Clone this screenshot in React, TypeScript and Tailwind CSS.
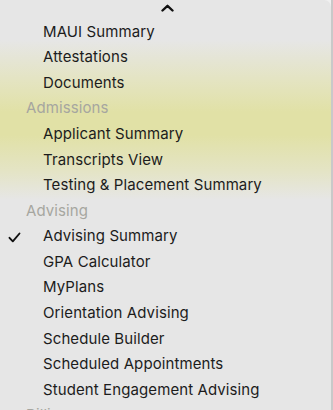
import React from "react";

type Row = { label: string; header?: boolean; checked?: boolean };

const rows: Row[] = [
  { label: "MAUI Summary" },
  { label: "Attestations" },
  { label: "Documents" },
  { label: "Admissions", header: true },
  { label: "Applicant Summary" },
  { label: "Transcripts View" },
  { label: "Testing & Placement Summary" },
  { label: "Advising", header: true },
  { label: "Advising Summary", checked: true },
  { label: "GPA Calculator" },
  { label: "MyPlans" },
  { label: "Orientation Advising" },
  { label: "Schedule Builder" },
  { label: "Scheduled Appointments" },
  { label: "Student Engagement Advising" },
  { label: "Billing", header: true },
];

export default function App() {
  return (
    <div className="w-[333px] h-[410px] overflow-hidden bg-[#f0f0f0] flex">
      <div
        className="w-[331px] h-full rounded-tr-[7px] overflow-hidden flex flex-col bg-[linear-gradient(to_bottom,#e6e6e6_0px,#e6e6e6_40px,#e4e4c2_80px,#e1e1a6_112px,#e1e1a6_135px,#e4e4c4_170px,#e6e6e6_200px,#e6e6e6_100%)]"
        style={{ fontFamily: "Inter, 'Noto Sans', sans-serif" }}
      >
        <div className="h-[19px] shrink-0 flex justify-center items-start pt-[4px] pl-[4px]">
          <svg width="13" height="8" viewBox="0 0 13 8">
            <path d="M1.5 6.5 L6.5 1.8 L11.5 6.5" fill="none" stroke="#111" strokeWidth="2.4" strokeLinecap="round" strokeLinejoin="round" />
          </svg>
        </div>
        {rows.map((r) => (
          <div key={r.label} className="h-[25.6px] shrink-0 flex items-center relative">
            {r.checked && (
              <svg className="absolute left-[8px] top-[8px]" width="13" height="11" viewBox="0 0 13 11">
                <path d="M1.5 5.8 L4.8 9.3 L11.5 1.5" fill="none" stroke="#111" strokeWidth="1.9" strokeLinecap="round" strokeLinejoin="round" />
              </svg>
            )}
            <span
              className={
                r.header
                  ? "pl-[26px] text-[15px] text-[#a6a6a0] tracking-[0.1px]"
                  : "pl-[43px] text-[15px] text-[#1c1c1c] tracking-[0.1px]"
              }
            >
              {r.label}
            </span>
          </div>
        ))}
      </div>
      <div className="w-[2px] h-full bg-[#c9c9c9]" />
    </div>
  );
}
